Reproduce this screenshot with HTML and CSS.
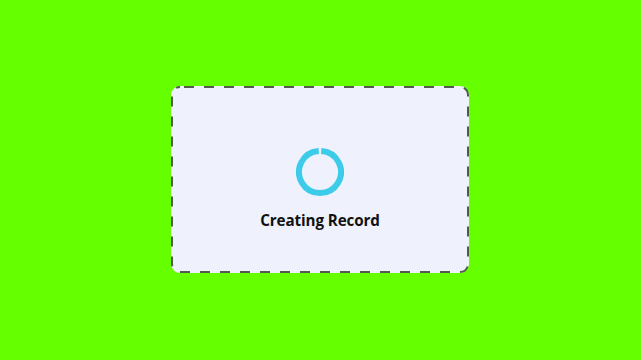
FILE: index.html
```html
<!DOCTYPE html>
<html>
<head>
<meta charset="utf-8">
<link rel="stylesheet" href="styles.css">
</head>
<body>
<div class="stage">
  <div class="card">
    <svg class="frame" width="298" height="187" viewBox="0 0 298 187">
      <rect x="1" y="1" width="296" height="185" rx="8" ry="8" fill="none" stroke="#4f5c49" stroke-width="2" stroke-dasharray="10 10" stroke-dashoffset="-4"/>
    </svg>
    <svg class="spinner" width="48" height="48" viewBox="0 0 48 48">
      <path d="M 25.2 3.03 A 21 21 0 1 1 22.8 3.03" fill="none" stroke="#3dcbea" stroke-width="6" stroke-linecap="butt"/>
    </svg>
    <div class="label">Creating Record</div>
  </div>
</div>
</body>
</html>
```
FILE: styles.css
```css
html, body {
  margin: 0;
  padding: 0;
  width: 641px;
  height: 360px;
  background: #66ff00;
  overflow: hidden;
}
.stage {
  width: 641px;
  height: 360px;
  display: flex;
  align-items: center;
  justify-content: center;
}
.card {
  position: relative;
  box-sizing: border-box;
  width: 298px;
  height: 187px;
  margin-top: -1px;
  margin-left: -1px;
  background: #eff2fc;
  border-radius: 9px;
  display: flex;
  flex-direction: column;
  align-items: center;
  padding-top: 62px;
}
.frame {
  position: absolute;
  left: 0;
  top: 0;
}
.spinner {
  display: block;
}
.label {
  margin-top: 14px;
  font-family: "Open Sans", "Noto Sans", sans-serif;
  font-weight: 700;
  font-size: 15.2px;
  color: #111;
  letter-spacing: -0.1px;
}
```
